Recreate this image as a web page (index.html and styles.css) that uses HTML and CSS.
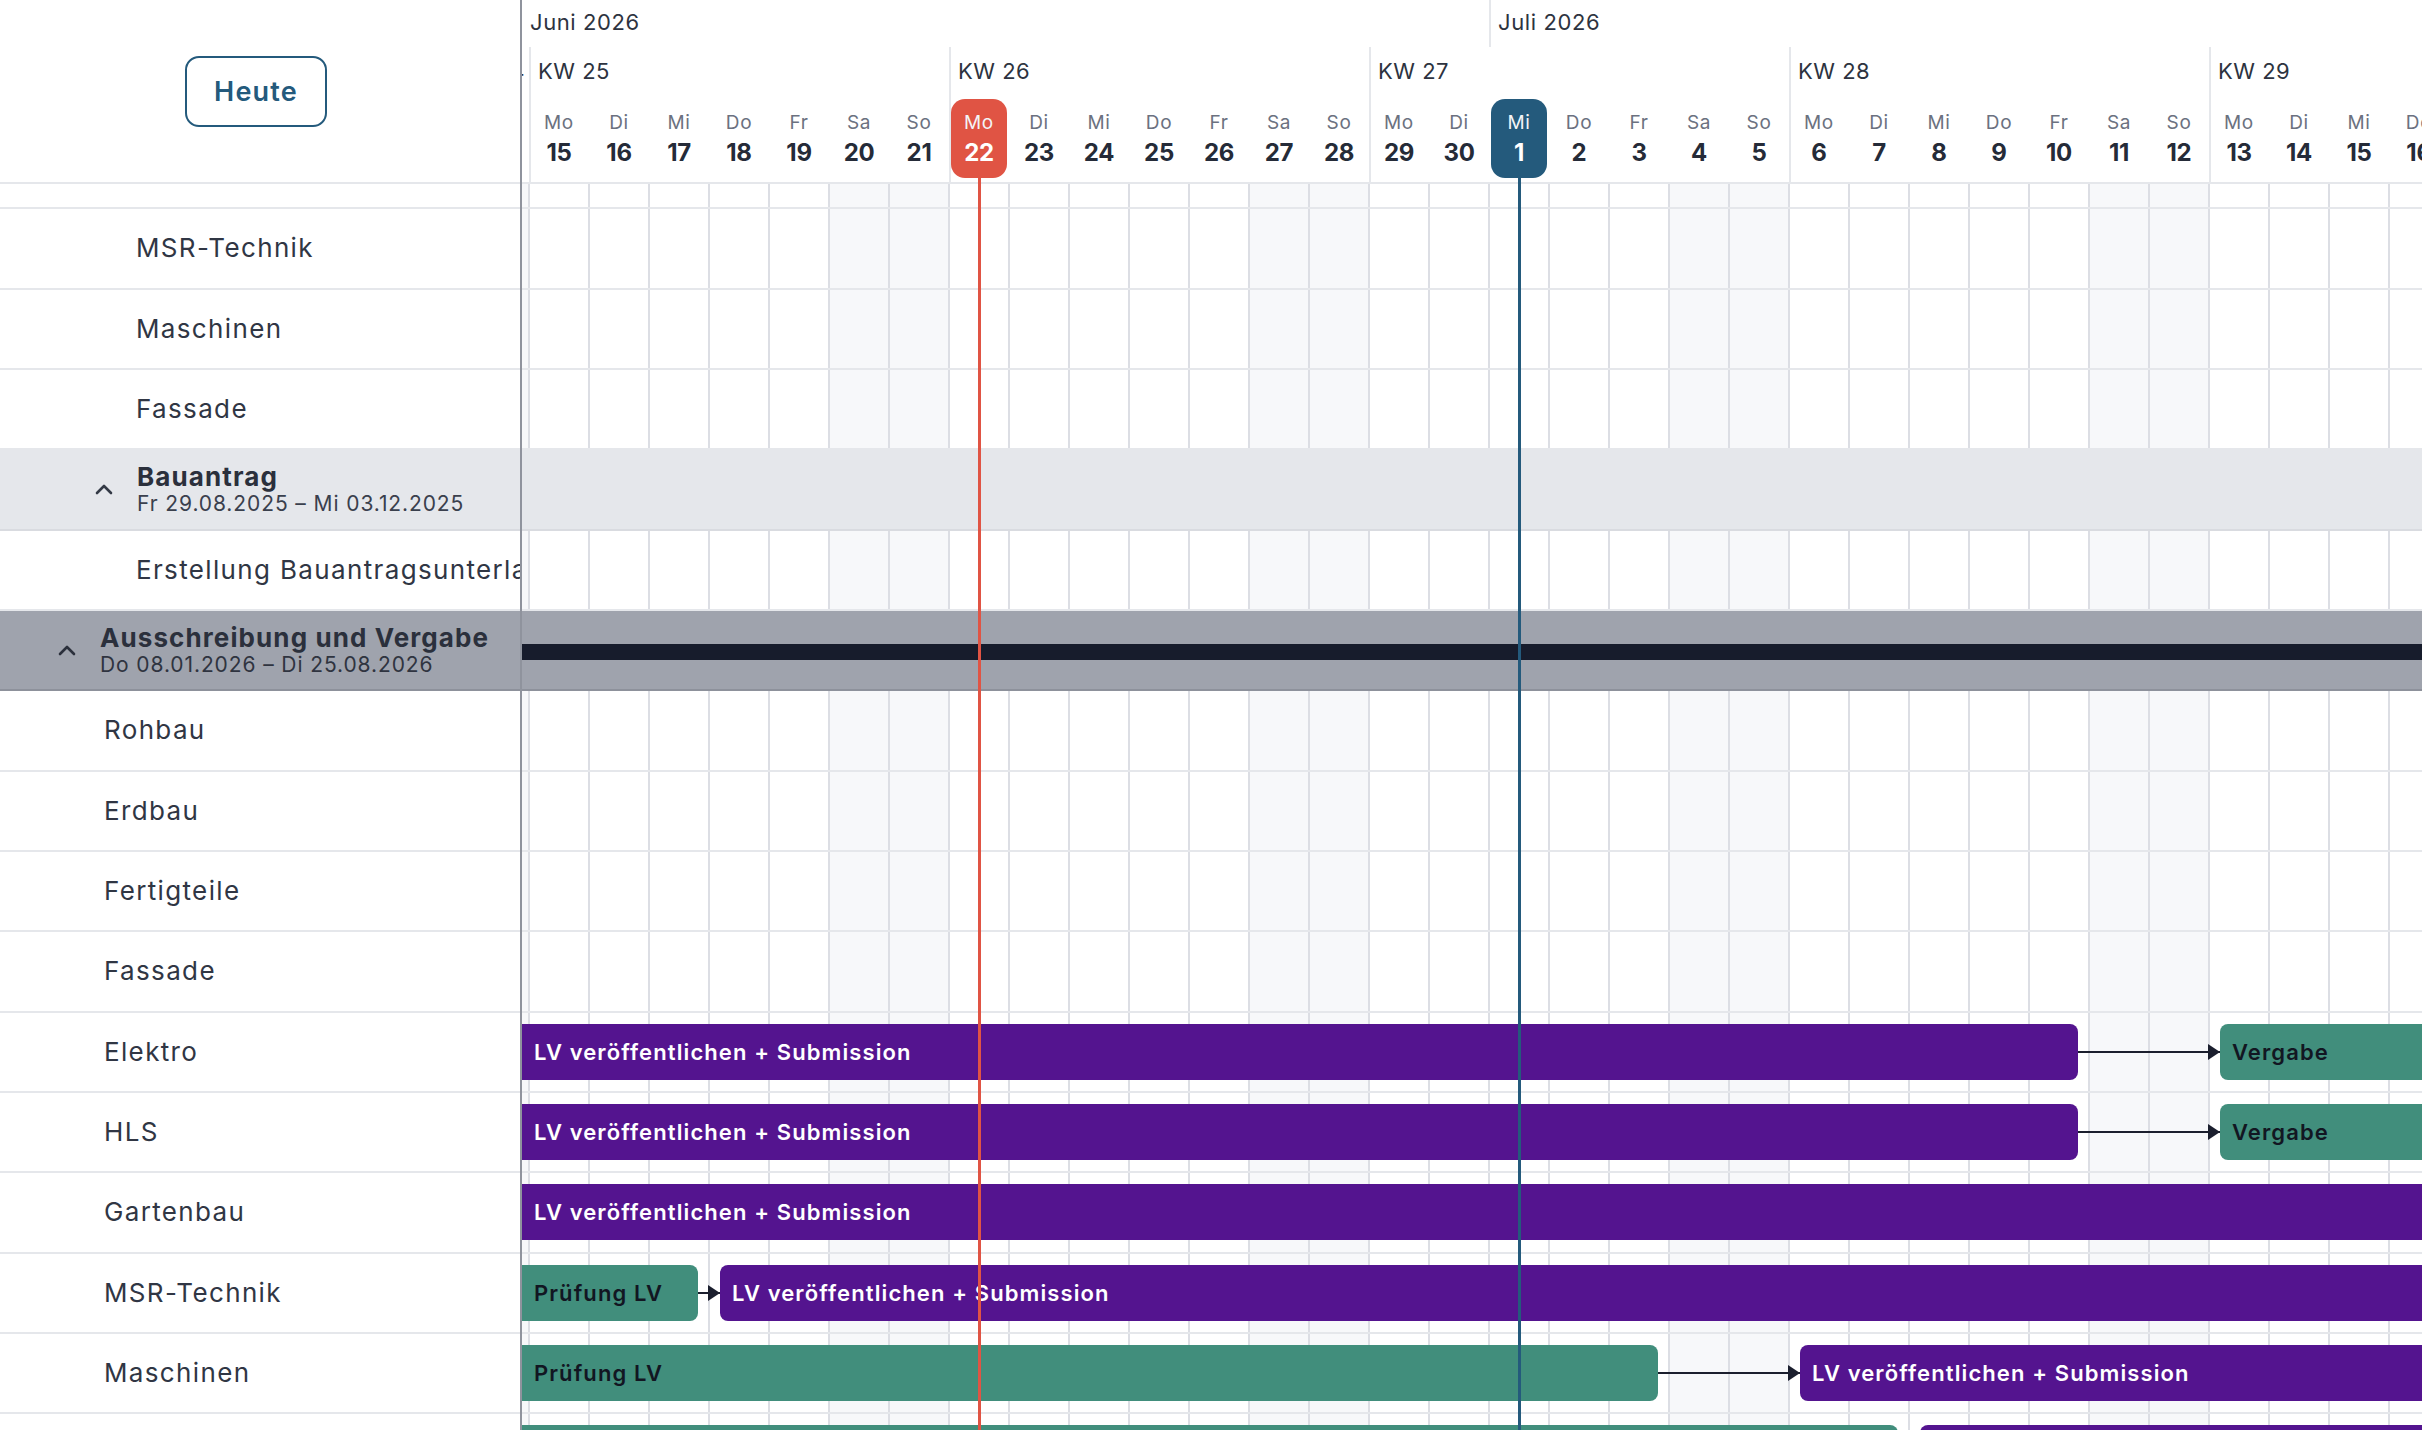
FILE: index.html
```html
<!DOCTYPE html>
<html lang="de">
<head>
<meta charset="utf-8">
<title>Terminplan</title>
<link rel="stylesheet" href="styles.css">
</head>
<body>
<div class="app">
  <aside class="side">
    <div class="side-head"><button class="today-btn">Heute</button></div>
    <div class="side-body">
      <div class="side-rows">
        <div class="srow l2">Fertigteile</div>
        <div class="srow l2">MSR-Technik</div>
        <div class="srow l2">Maschinen</div>
        <div class="srow l2">Fassade</div>
        <div class="srow grp g2 glight">
          <svg class="chev" width="20" height="12" viewBox="0 0 20 12"><path d="M3 10 L10 3 L17 10" fill="none" stroke="#343a46" stroke-width="2.6" stroke-linecap="round" stroke-linejoin="round"/></svg>
          <div class="gtext"><div class="gt">Bauantrag</div><div class="gd">Fr 29.08.2025 – Mi 03.12.2025</div></div>
        </div>
        <div class="srow l2">Erstellung Bauantragsunterlagen</div>
        <div class="srow grp g1 gdark">
          <svg class="chev" width="20" height="12" viewBox="0 0 20 12"><path d="M3 10 L10 3 L17 10" fill="none" stroke="#2b303c" stroke-width="2.6" stroke-linecap="round" stroke-linejoin="round"/></svg>
          <div class="gtext"><div class="gt">Ausschreibung und Vergabe</div><div class="gd">Do 08.01.2026 – Di 25.08.2026</div></div>
        </div>
        <div class="srow l1">Rohbau</div>
        <div class="srow l1">Erdbau</div>
        <div class="srow l1">Fertigteile</div>
        <div class="srow l1">Fassade</div>
        <div class="srow l1">Elektro</div>
        <div class="srow l1">HLS</div>
        <div class="srow l1">Gartenbau</div>
        <div class="srow l1">MSR-Technik</div>
        <div class="srow l1">Maschinen</div>
        <div class="srow l1">Fassade</div>
      </div>
    </div>
  </aside>
  <main class="tl">
    <div class="tl-inner">
      <div class="tl-head">
        <div class="months">
          <div class="month jun">Juni 2026</div>
          <div class="month jul">Juli 2026</div>
        </div>
        <div class="weeks">
          <div class="week kw-part">KW 24</div>
          <div class="week">KW 25</div>
          <div class="week">KW 26</div>
          <div class="week">KW 27</div>
          <div class="week">KW 28</div>
          <div class="week">KW 29</div>
        </div>
        <div class="days">
          <div class="day"><div class="dbox"><span class="dn">So</span><span class="dd">14</span></div></div>
          <div class="day mon"><div class="dbox"><span class="dn">Mo</span><span class="dd">15</span></div></div>
          <div class="day"><div class="dbox"><span class="dn">Di</span><span class="dd">16</span></div></div>
          <div class="day"><div class="dbox"><span class="dn">Mi</span><span class="dd">17</span></div></div>
          <div class="day"><div class="dbox"><span class="dn">Do</span><span class="dd">18</span></div></div>
          <div class="day"><div class="dbox"><span class="dn">Fr</span><span class="dd">19</span></div></div>
          <div class="day"><div class="dbox"><span class="dn">Sa</span><span class="dd">20</span></div></div>
          <div class="day"><div class="dbox"><span class="dn">So</span><span class="dd">21</span></div></div>
          <div class="day mon"><div class="dbox today"><span class="dn">Mo</span><span class="dd">22</span></div></div>
          <div class="day"><div class="dbox"><span class="dn">Di</span><span class="dd">23</span></div></div>
          <div class="day"><div class="dbox"><span class="dn">Mi</span><span class="dd">24</span></div></div>
          <div class="day"><div class="dbox"><span class="dn">Do</span><span class="dd">25</span></div></div>
          <div class="day"><div class="dbox"><span class="dn">Fr</span><span class="dd">26</span></div></div>
          <div class="day"><div class="dbox"><span class="dn">Sa</span><span class="dd">27</span></div></div>
          <div class="day"><div class="dbox"><span class="dn">So</span><span class="dd">28</span></div></div>
          <div class="day mon"><div class="dbox"><span class="dn">Mo</span><span class="dd">29</span></div></div>
          <div class="day"><div class="dbox"><span class="dn">Di</span><span class="dd">30</span></div></div>
          <div class="day"><div class="dbox selected"><span class="dn">Mi</span><span class="dd">1</span></div></div>
          <div class="day"><div class="dbox"><span class="dn">Do</span><span class="dd">2</span></div></div>
          <div class="day"><div class="dbox"><span class="dn">Fr</span><span class="dd">3</span></div></div>
          <div class="day"><div class="dbox"><span class="dn">Sa</span><span class="dd">4</span></div></div>
          <div class="day"><div class="dbox"><span class="dn">So</span><span class="dd">5</span></div></div>
          <div class="day mon"><div class="dbox"><span class="dn">Mo</span><span class="dd">6</span></div></div>
          <div class="day"><div class="dbox"><span class="dn">Di</span><span class="dd">7</span></div></div>
          <div class="day"><div class="dbox"><span class="dn">Mi</span><span class="dd">8</span></div></div>
          <div class="day"><div class="dbox"><span class="dn">Do</span><span class="dd">9</span></div></div>
          <div class="day"><div class="dbox"><span class="dn">Fr</span><span class="dd">10</span></div></div>
          <div class="day"><div class="dbox"><span class="dn">Sa</span><span class="dd">11</span></div></div>
          <div class="day"><div class="dbox"><span class="dn">So</span><span class="dd">12</span></div></div>
          <div class="day mon"><div class="dbox"><span class="dn">Mo</span><span class="dd">13</span></div></div>
          <div class="day"><div class="dbox"><span class="dn">Di</span><span class="dd">14</span></div></div>
          <div class="day"><div class="dbox"><span class="dn">Mi</span><span class="dd">15</span></div></div>
          <div class="day"><div class="dbox"><span class="dn">Do</span><span class="dd">16</span></div></div>
          <div class="day"><div class="dbox"><span class="dn">Fr</span><span class="dd">17</span></div></div>
          <div class="day"><div class="dbox"><span class="dn">Sa</span><span class="dd">18</span></div></div>
          <div class="day"><div class="dbox"><span class="dn">So</span><span class="dd">19</span></div></div>
        </div>
      </div>
      <div class="tl-body">
        <div class="tl-rows">
          <div class="trow"></div>
          <div class="trow"></div>
          <div class="trow"></div>
          <div class="trow"></div>
          <div class="trow glight"></div>
          <div class="trow"></div>
          <div class="trow gdark"><div class="sumbar"></div></div>
          <div class="trow"></div>
          <div class="trow"></div>
          <div class="trow"></div>
          <div class="trow"></div>
          <div class="trow">
            <div class="bar lv from-start" style="width:1589px">LV veröffentlichen + Submission</div>
            <div class="arrow" style="left:1609px;width:142px"></div>
            <div class="bar pr" style="left:1751px;width:480px">Vergabe</div>
          </div>
          <div class="trow">
            <div class="bar lv from-start" style="width:1589px">LV veröffentlichen + Submission</div>
            <div class="arrow" style="left:1609px;width:142px"></div>
            <div class="bar pr" style="left:1751px;width:480px">Vergabe</div>
          </div>
          <div class="trow">
            <div class="bar lv from-start" style="width:2200px">LV veröffentlichen + Submission</div>
          </div>
          <div class="trow">
            <div class="bar pr from-start" style="width:209px">Prüfung LV</div>
            <div class="arrow" style="left:229px;width:22px"></div>
            <div class="bar lv" style="left:251px;width:2000px">LV veröffentlichen + Submission</div>
          </div>
          <div class="trow">
            <div class="bar pr from-start" style="width:1169px">Prüfung LV</div>
            <div class="arrow" style="left:1189px;width:142px"></div>
            <div class="bar lv" style="left:1331px;width:900px">LV veröffentlichen + Submission</div>
          </div>
          <div class="trow">
            <div class="bar pr from-start" style="width:1409px">Prüfung LV</div>
            <div class="arrow" style="left:1429px;width:22px"></div>
            <div class="bar lv" style="left:1451px;width:900px">LV veröffentlichen + Submission</div>
          </div>
        </div>
      </div>
      <div class="marker red" style="left:509px"></div>
      <div class="marker blue" style="left:1049px"></div>
    </div>
  </main>
</div>
</body>
</html>
```
FILE: styles.css
```css
* { box-sizing: border-box; }
html, body { margin: 0; padding: 0; }
body {
  font-family: Inter, "Noto Sans", "DejaVu Sans", sans-serif;
  color: #303644;
  background: #fff;
  overflow: hidden;
}
.app { display: flex; width: 2422px; height: 1430px; overflow: hidden; }

/* ---------- left panel ---------- */
.side {
  width: 522px;
  flex: none;
  border-right: 2px solid #8f939d;
  display: flex;
  flex-direction: column;
  background: #fff;
}
.side-head {
  height: 184px;
  flex: none;
  border-bottom: 2px solid #e5e7eb;
  display: flex;
  align-items: center;
  justify-content: center;
  padding-right: 8px;
}
.today-btn {
  width: 142px;
  height: 71px;
  border: 2px solid #245a7c;
  border-radius: 14px;
  background: #fff;
  color: #245a7c;
  font-family: inherit;
  font-size: 27px;
  font-weight: 600;
  letter-spacing: 1.2px;
  padding: 0;
}
.side-body { flex: 1; overflow: hidden; }
.side-rows { margin-top: -55px; }
.srow {
  height: 80.33px;
  border-bottom: 2px solid #e5e7eb;
  display: flex;
  align-items: center;
  font-size: 26px;
  letter-spacing: 1.35px;
  white-space: nowrap;
  overflow: hidden;
  padding-bottom: 1px;
}
.srow.l1 { padding-left: 104px; }
.srow.l2 { padding-left: 136px; }
.grp { letter-spacing: 0; gap: 23px; padding-bottom: 0; }
.grp.g1 { padding-left: 57px; }
.grp.g2 { padding-left: 94px; }
.glight { background: #e5e7eb; border-bottom-color: #d9dbe0; }
.gdark { background: #9fa3ad; border-bottom-color: #8d919b; }
.chev { flex: none; }
.gtext { display: flex; flex-direction: column; padding-top: 2px; }
.gt { font-size: 26px; font-weight: 700; line-height: 28px; color: #2b303c; letter-spacing: 1.1px; }
.gd { font-size: 21px; line-height: 26px; color: #3a404d; letter-spacing: 0.9px; }
.gdark .gd { color: #2f3440; }

/* ---------- timeline ---------- */
.tl { flex: 1; overflow: hidden; position: relative; }
.tl-inner { margin-left: -53px; width: 2160px; position: relative; height: 1430px; }

.tl-head { height: 184px; border-bottom: 2px solid #e5e7eb; }
.months { height: 47px; display: flex; }
.month {
  display: flex;
  align-items: center;
  padding-bottom: 3px;
  font-size: 22px;
  letter-spacing: 0.6px;
  color: #2d3340;
}
.month.jun { width: 1020px; padding-left: 61px; }
.month.jul { width: 1140px; padding-left: 7px; border-left: 2px solid #e5e7eb; }

.weeks { height: 50px; display: flex; }
.week {
  width: 420px;
  flex: none;
  border-left: 2px solid #e5e7eb;
  display: flex;
  align-items: center;
  padding-left: 7px;
  padding-bottom: 3px;
  font-size: 22px;
  letter-spacing: 0.5px;
  color: #2d3340;
  white-space: nowrap;
}
.week.kw-part { width: 60px; border-left: none; justify-content: flex-end; padding-left: 0; padding-right: 4px; }

.days { height: 85px; display: flex; }
.day { width: 60px; flex: none; display: flex; justify-content: center; }
.day.mon { box-shadow: inset 2px 0 0 #e5e7eb; }
.dbox {
  width: 56px;
  height: 79px;
  margin-top: 2px;
  border-radius: 14px;
  display: flex;
  flex-direction: column;
  align-items: center;
  padding-top: 13px;
}
.dn { font-size: 19px; line-height: 22px; color: #6b7180; letter-spacing: 0.6px; }
.dd { font-size: 24px; line-height: 30px; margin-top: 4px; font-weight: 700; color: #252b38; letter-spacing: -0.3px; }
.dbox.today { background: #e05444; }
.dbox.selected { background: #245a7c; }
.dbox.today .dn, .dbox.selected .dn { color: #f3f4f6; }
.dbox.today .dd, .dbox.selected .dd { color: #fff; }

.tl-body { height: 1246px; overflow: hidden; }
.tl-rows { margin-top: -55px; }
.trow {
  height: 80.33px;
  border-bottom: 2px solid #e5e7eb;
  position: relative;
  background-image:
    repeating-linear-gradient(90deg, #dcdee4 0 2px, transparent 2px 60px),
    repeating-linear-gradient(90deg, #f7f8fa 0 60px, transparent 60px 360px, #f7f8fa 360px 420px);
  background-position: -1px 0, 0 0;
}
.trow.glight { background: #e5e7eb; border-bottom-color: #d9dbe0; }
.trow.gdark { background: #9fa3ad; border-bottom-color: #8d919b; }
.sumbar { position: absolute; left: 0; right: 0; top: 33px; height: 16px; background: #171c2c; }

.bar {
  position: absolute;
  top: 11px;
  height: 56px;
  border-radius: 8px;
  display: flex;
  align-items: center;
  padding-left: 12px;
  font-size: 22px;
  font-weight: 600;
  letter-spacing: 1.1px;
  white-space: nowrap;
  overflow: hidden;
}
.bar.lv { background: #54148f; color: #fff; }
.bar.pr { background: #418e7c; color: #121622; }
.bar.from-start { left: 20px; padding-left: 45px; }

.arrow { position: absolute; top: 38px; height: 2px; background: #1b1f2e; }
.arrow::after {
  content: "";
  position: absolute;
  right: 0;
  top: -7px;
  border-left: 12px solid #1b1f2e;
  border-top: 8px solid transparent;
  border-bottom: 8px solid transparent;
}

.marker { position: absolute; top: 178px; bottom: 0; width: 3px; z-index: 3; }
.marker.red { background: #e05444; }
.marker.blue { background: #245a7c; }
```
